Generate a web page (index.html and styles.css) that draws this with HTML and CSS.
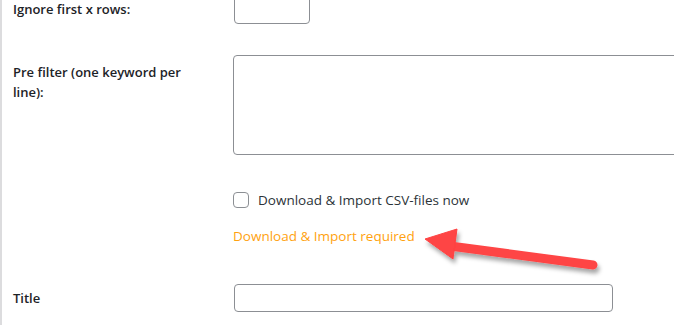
FILE: index.html
```html
<!DOCTYPE html>
<html>
<head>
<meta charset="utf-8">
<link rel="stylesheet" href="styles.css">
</head>
<body>
<div class="panel">
  <div class="row row-ignore">
    <div class="label">Ignore first x rows:</div>
    <div class="field"><input class="input small" type="text"></div>
  </div>
  <div class="row row-filter">
    <div class="label label-top">Pre filter (one keyword per line):</div>
    <div class="field"><textarea class="textarea"></textarea></div>
  </div>
  <div class="row row-check">
    <div class="label"></div>
    <div class="field check-field"><span class="checkbox"></span><span class="check-text">Download &amp; Import CSV-files now</span></div>
  </div>
  <div class="row row-notice">
    <div class="label"></div>
    <div class="field"><span class="notice">Download &amp; Import required</span></div>
  </div>
  <div class="row row-title">
    <div class="label">Title</div>
    <div class="field"><input class="input wide" type="text"></div>
  </div>
</div>
<svg class="arrow" width="674" height="331" viewBox="0 0 674 331">
  <defs>
    <filter id="sh" x="-20%" y="-50%" width="140%" height="200%">
      <feDropShadow dx="2" dy="4" stdDeviation="2" flood-color="#000" flood-opacity="0.35"/>
    </filter>
  </defs>
  <g filter="url(#sh)" fill="#fe4444" stroke="#fe4444">
    <line x1="450" y1="246" x2="593" y2="265" stroke-width="9" stroke-linecap="round"/>
    <polygon points="425,239 457,229 453,259" stroke-width="1" stroke-linejoin="round"/>
  </g>
</svg>
</body>
</html>
```
FILE: styles.css
```css
html, body {
  margin: 0;
  padding: 0;
  background: #fff;
  overflow: hidden;
}
body {
  width: 674px;
  height: 331px;
  position: relative;
  font-family: "Open Sans", "Noto Sans", sans-serif;
  font-size: 13px;
  color: #1d2327;
}
.panel {
  height: 331px;
  border-left: 2px solid #dcdcde;
  padding-left: 11px;
  box-sizing: border-box;
}
.row {
  display: flex;
}
.label {
  width: 220px;
  flex: none;
  font-weight: 600;
  line-height: 20px;
}
.field {
  flex: 1;
  min-width: 0;
}
.row-ignore {
  margin-top: -6px;
  height: 30px;
  align-items: center;
}
.row-filter {
  margin-top: 31px;
}
.label-top {
  padding-top: 7px;
  width: 190px;
  margin-right: 30px;
  line-height: 20px;
}
.row-check {
  margin-top: 37px;
  height: 16px;
  align-items: center;
}
.check-field {
  display: flex;
  align-items: center;
  gap: 9px;
  line-height: 16px;
  font-size: 13.5px;
}
.row-notice {
  margin-top: 18px;
  line-height: 20px;
  font-size: 13.5px;
}
.row-title {
  margin-top: 38px;
  height: 28px;
  align-items: center;
}
.input, .textarea {
  display: block;
  box-sizing: border-box;
  border: 1px solid #8c8f94;
  border-radius: 4px;
  background: #fff;
  margin: 0;
  padding: 0 8px;
  font: inherit;
}
.small {
  width: 76px;
  height: 30px;
  margin-left: 1px;
}
.wide {
  width: 379px;
  height: 28px;
  margin-left: 1px;
}
.textarea {
  width: 480px;
  height: 100px;
  resize: none;
}
.checkbox {
  display: block;
  width: 16px;
  height: 16px;
  box-sizing: border-box;
  border: 1px solid #8c8f94;
  border-radius: 4px;
  flex: none;
}
.check-text {
  color: #2c3338;
}
.notice {
  color: #ffa20f;
}
.arrow {
  position: absolute;
  left: 0;
  top: 0;
  pointer-events: none;
}
```
